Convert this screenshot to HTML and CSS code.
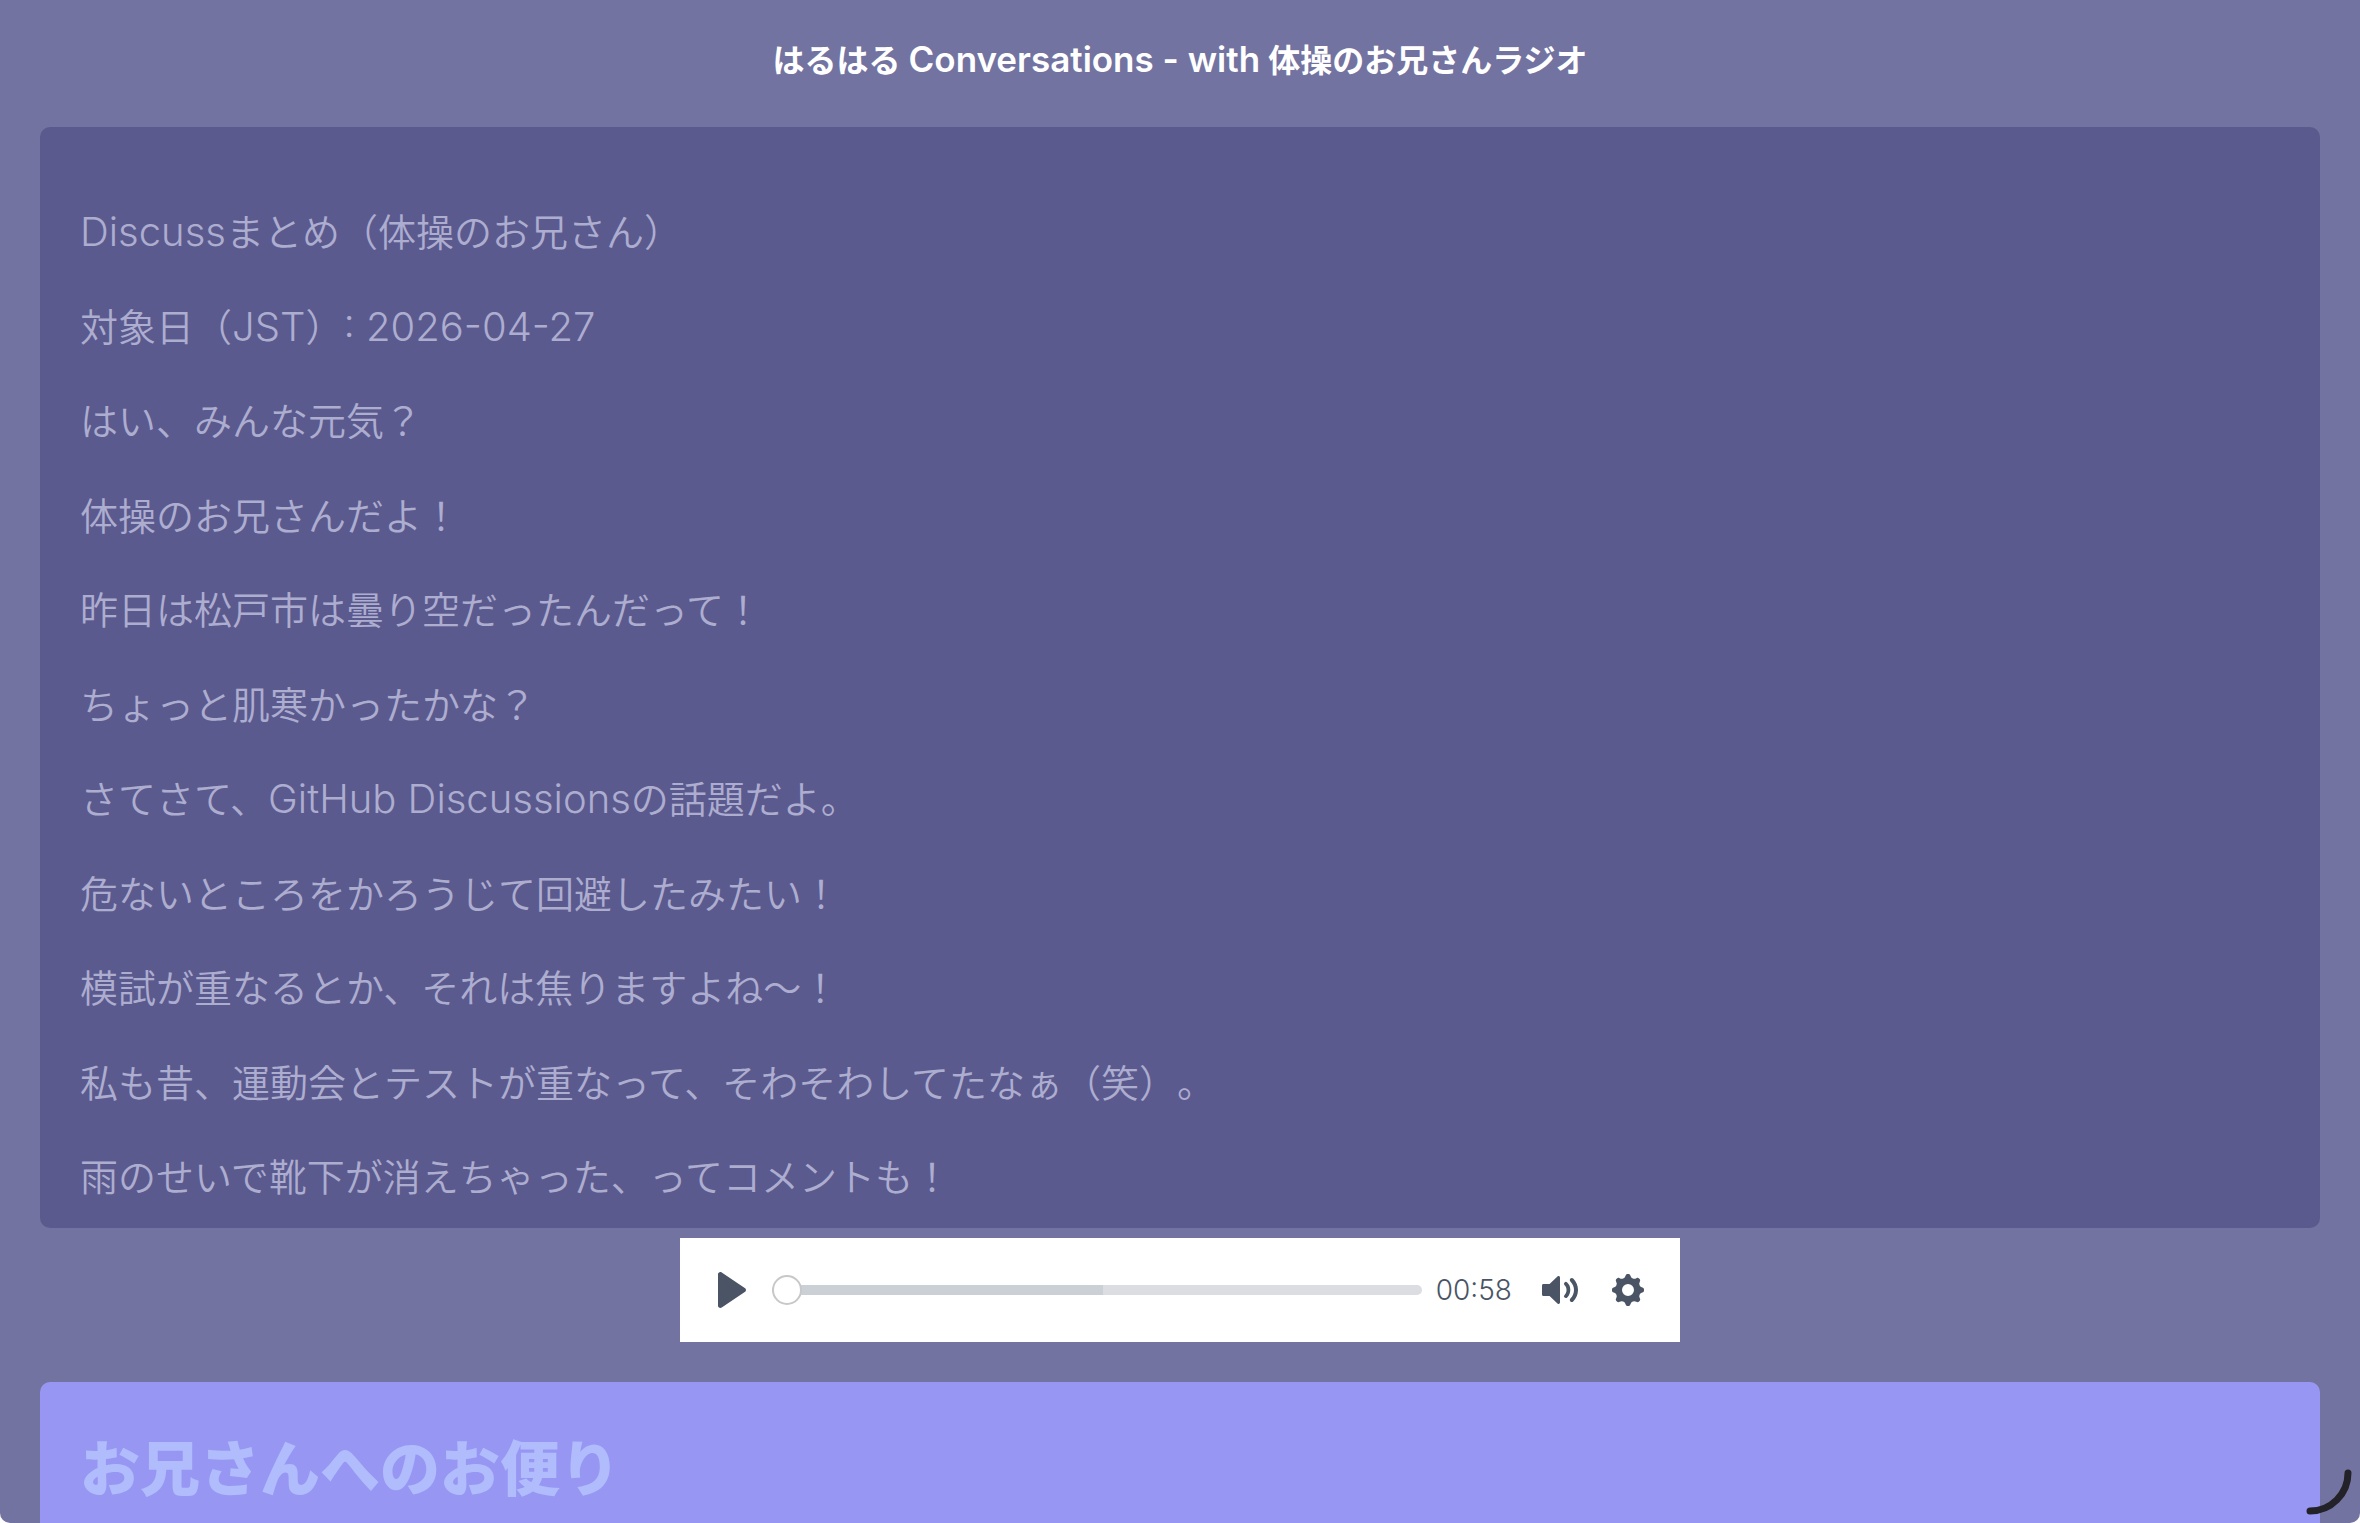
FILE: index.html
```html
<!DOCTYPE html>
<html lang="ja">
<head>
    <meta charset="UTF-8">
    <meta name="viewport" content="width=device-width, initial-scale=1.0">
    <title>はるはる Conversations - with 体操のお兄さんラジオ</title>
    <link rel="stylesheet" href="styles.css">
</head>
<body>
    <div class="app">
        <header class="header">
            <h1>はるはる <span class="latin">Conversations - with</span> 体操のお兄さんラジオ</h1>
        </header>

        <main class="container">
            <!-- Radio script -->
            <article class="script">
                <p><span class="latin">Discuss</span>まとめ（体操のお兄さん）</p>
                <p>対象日（<span class="latin">JST</span>）<span class="latin">: 2026-04-27</span></p>
                <p>はい、みんな元気？</p>
                <p>体操のお兄さんだよ！</p>
                <p>昨日は松戸市は曇り空だったんだって！</p>
                <p>ちょっと肌寒かったかな？</p>
                <p>さてさて、<span class="latin">GitHub Discussions</span>の話題だよ。</p>
                <p>危ないところをかろうじて回避したみたい！</p>
                <p>模試が重なるとか、それは焦りますよね〜！</p>
                <p>私も昔、運動会とテストが重なって、そわそわしてたなぁ（笑）。</p>
                <p>雨のせいで靴下が消えちゃった、ってコメントも！</p>
            </article>

            <!-- Audio player -->
            <div class="player">
                <button class="player-button" type="button" aria-label="Play">
                    <svg viewBox="0 0 18 18"><path d="M15.562 8.1L3.87.225c-.818-.562-1.87 0-1.87.9v15.75c0 .9 1.052 1.462 1.87.9L15.563 9.9c.584-.45.584-1.35 0-1.8z"/></svg>
                </button>
                <input class="player-seek" type="range" min="0" max="58" step="1" value="0" aria-label="Seek">
                <span class="player-time">00:58</span>
                <div class="player-menu">
                    <button class="player-button" type="button" aria-label="Mute">
                        <svg viewBox="0 0 18 18"><path d="M15.6 3.3c-.4-.4-1-.4-1.4 0-.4.4-.4 1 0 1.4C15.4 5.9 16 7.4 16 9c0 1.6-.6 3.1-1.8 4.3-.4.4-.4 1 0 1.4.2.2.5.3.7.3.3 0 .5-.1.7-.3C17.1 13.2 18 11.2 18 9s-.9-4.2-2.4-5.7z"/><path d="M11.282 5.282a.909.909 0 000 1.316c.735.735.995 1.458.995 2.402 0 .936-.425 1.917-.995 2.487a.909.909 0 000 1.316c.145.145.636.262 1.018.156a.725.725 0 00.298-.156C13.773 11.733 14.13 10.16 14.13 9c0-.17-.002-.34-.011-.51-.053-.992-.319-2.005-1.522-3.208a.909.909 0 00-1.316 0zM3.786 6.008H.714C.286 6.008 0 6.31 0 6.76v4.512c0 .452.286.752.714.752h3.072l4.071 3.858c.5.3 1.143 0 1.143-.602V2.752c0-.601-.643-.977-1.143-.601L3.786 6.008z"/></svg>
                    </button>
                    <button class="player-button" type="button" aria-label="Settings">
                        <svg viewBox="0 0 18 18"><path d="M16.135 7.784a2 2 0 01-1.23-2.969c.322-.536.225-.998-.094-1.316l-.31-.31c-.318-.318-.78-.415-1.316-.094a2 2 0 01-2.969-1.23C10.065 1.258 9.669 1 9.219 1h-.438c-.45 0-.845.258-.997.865a2 2 0 01-2.969 1.23c-.536-.322-.999-.225-1.317.093l-.31.31c-.318.318-.415.781-.093 1.317a2 2 0 01-1.23 2.969C1.26 7.935 1 8.33 1 8.781v.438c0 .45.258.845.865.997a2 2 0 011.23 2.969c-.322.536-.225.998.094 1.316l.31.31c.319.319.782.415 1.316.094a2 2 0 012.969 1.23c.151.607.547.865.997.865h.438c.45 0 .845-.258.997-.865a2 2 0 012.969-1.23c.535.321.997.225 1.316-.094l.31-.31c.318-.318.415-.781.094-1.316a2 2 0 011.23-2.969c.607-.151.865-.547.865-.997v-.438c0-.451-.26-.846-.865-.997zM9 12a3 3 0 110-6 3 3 0 010 6z"/></svg>
                    </button>
                </div>
            </div>

            <!-- Letters -->
            <section class="letters">
                <h2>お兄さんへのお便り</h2>
            </section>
        </main>

        <svg class="corner" viewBox="0 0 50 50" aria-hidden="true"><path d="M44 6A38 38 0 0 1 6 44"/></svg>
    </div>
</body>
</html>
```
FILE: styles.css
```css
* {
    box-sizing: border-box;
}
body {
    margin: 0;
    background-color: #ffffff;
    font-family: Inter, "Noto Sans CJK JP", sans-serif;
    text-spacing-trim: space-all;
}
.app {
    position: relative;
    height: 100vh;
    overflow: hidden;
    background-color: #7373a1;
    border-radius: 0 0 10px 10px;
}
.header {
    padding: 37px 40px 42px;
    text-align: center;
}
.header h1 {
    margin: 0;
    color: #ffffff;
    font-size: 32px;
    font-weight: 600;
    line-height: 48px;
}
.header .latin {
    font-size: 35px;
    line-height: 1;
}
.container {
    padding: 0 40px;
}
.script {
    display: flex;
    flex-direction: column;
    justify-content: space-between;
    height: 72.3vh;
    padding: 77px 40px 23px;
    overflow: hidden;
    background-color: #5b5a8e;
    border-radius: 10px;
    color: #adadd0;
    font-size: 38px;
    font-weight: 350;
    line-height: 56px;
}
.script p {
    margin: 0;
}
.script .latin {
    font-size: 40px;
    line-height: 1;
}

/* Player */
.player {
    display: flex;
    align-items: center;
    max-width: 1000px;
    margin: 10px auto 40px;
    padding: 20px;
    background-color: #ffffff;
    color: #4a5464;
}
.player-button {
    flex: none;
    padding: 14px;
    border: none;
    background: none;
    color: inherit;
    cursor: pointer;
}
.player-button svg {
    display: block;
    width: 36px;
    height: 36px;
    fill: currentColor;
}
.player-seek {
    flex: 1;
    min-width: 0;
    height: 30px;
    margin: 0 14px 0 8px;
    -webkit-appearance: none;
    appearance: none;
    background: none;
}
.player-seek::-webkit-slider-runnable-track {
    height: 10px;
    border-radius: 5px;
    background: linear-gradient(to right, #cad0d5 51%, #dbdde3 51%);
}
.player-seek::-webkit-slider-thumb {
    -webkit-appearance: none;
    width: 30px;
    height: 30px;
    margin-top: -10px;
    border: 2px solid #c8c8cb;
    border-radius: 50%;
    background: #ffffff;
}
.player-time {
    font-size: 28px;
    font-weight: 300;
    line-height: 40px;
}
.player-menu {
    display: flex;
    gap: 4px;
    margin-left: 16px;
}

/* Letters */
.letters {
    min-height: 400px;
    padding: 42px 40px;
    background-color: #9896f3;
    border-radius: 10px;
}
.letters h2 {
    margin: 0;
    color: #b0bcfc;
    font-size: 60px;
    font-weight: 900;
    line-height: 90px;
}

.corner {
    position: absolute;
    right: 6px;
    bottom: 6px;
    width: 50px;
    height: 50px;
    fill: none;
    stroke: #222228;
    stroke-width: 7;
    stroke-linecap: round;
}
```
